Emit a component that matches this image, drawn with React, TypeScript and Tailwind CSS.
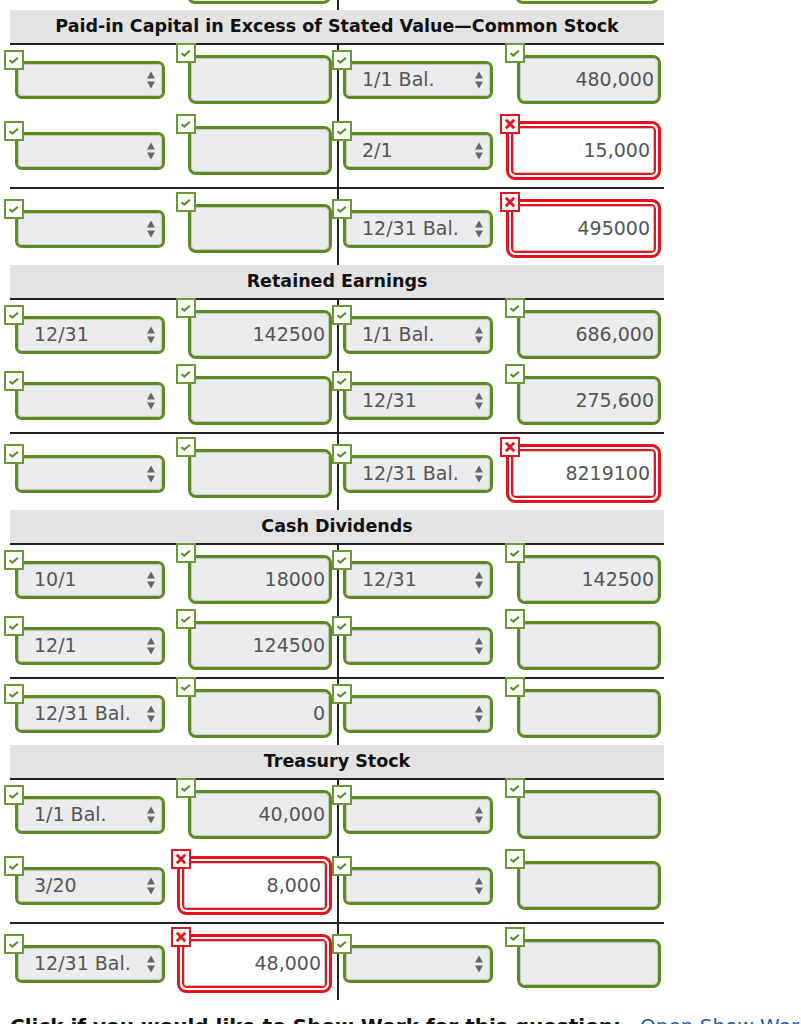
import React from "react"

type Cell = { sel?: string; val?: string; bad?: boolean }
type Row = { l: Cell; r: Cell; line?: boolean }
type Section = { title: string; rows: Row[] }

const sections: Section[] = [
  {
    title: "Paid-in Capital in Excess of Stated Value—Common Stock",
    rows: [
      { l: {}, r: { sel: "1/1 Bal.", val: "480,000" } },
      { l: {}, r: { sel: "2/1", val: "15,000", bad: true } },
      { l: {}, r: { sel: "12/31 Bal.", val: "495000", bad: true }, line: true },
    ],
  },
  {
    title: "Retained Earnings",
    rows: [
      { l: { sel: "12/31", val: "142500" }, r: { sel: "1/1 Bal.", val: "686,000" } },
      { l: {}, r: { sel: "12/31", val: "275,600" } },
      { l: {}, r: { sel: "12/31 Bal.", val: "8219100", bad: true }, line: true },
    ],
  },
  {
    title: "Cash Dividends",
    rows: [
      { l: { sel: "10/1", val: "18000" }, r: { sel: "12/31", val: "142500" } },
      { l: { sel: "12/1", val: "124500" }, r: {} },
      { l: { sel: "12/31 Bal.", val: "0" }, r: {}, line: true },
    ],
  },
  {
    title: "Treasury Stock",
    rows: [
      { l: { sel: "1/1 Bal.", val: "40,000" }, r: {} },
      { l: { sel: "3/20", val: "8,000", bad: true }, r: {} },
      { l: { sel: "12/31 Bal.", val: "48,000", bad: true }, r: {}, line: true },
    ],
  },
]

// small green tick badge that sits on the top-left corner of a field
function Tick({ pos }: { pos: string }) {
  return (
    <span className={`absolute ${pos} z-10 w-5 h-5 bg-white border-2 border-[#6a9a34]`}>
      <svg viewBox="0 0 16 16" className="w-4 h-4">
        <path d="M3.5 8.2l2.8 2.4 5.6-4.8" fill="none" stroke="#5b8c1f" strokeWidth="2" />
      </svg>
    </span>
  )
}

function Cross() {
  return (
    <span className="absolute -left-[6px] -top-[7px] z-10 w-5 h-5 bg-white border-2 border-[#e3141b]">
      <svg viewBox="0 0 16 16" className="w-4 h-4">
        <path d="M3.8 3.8l8.4 8.4M12.2 3.8l-8.4 8.4" fill="none" stroke="#e3141b" strokeWidth="2.8" />
      </svg>
    </span>
  )
}

function Arrows() {
  return (
    <svg viewBox="0 0 8 18" className="w-2 h-[18px] shrink-0">
      <path d="M0 7.5L4 0.5L8 7.5Z" fill="#676767" />
      <path d="M0 10.5L8 10.5L4 17.5Z" fill="#676767" />
    </svg>
  )
}

function Select({ v }: { v?: string }) {
  return (
    <div className="relative w-[150px] h-[38px] shrink-0">
      <Tick pos="-left-[11px] -top-[11px]" />
      <div className="h-full rounded-[7px] border-[3px] border-[#5b8c1f] bg-white">
        <div className="h-full flex items-center rounded-[4px] border border-[#c6c7c9] bg-[#ebecee] pl-[15px] pr-[6px]">
          <span className="flex-1 text-[19px] leading-none text-[#555] whitespace-nowrap">{v}</span>
          <Arrows />
        </div>
      </div>
    </div>
  )
}

function Amount({ v, bad }: { v?: string; bad?: boolean }) {
  if (bad) {
    return (
      <div className="relative w-[155px] h-[59px]">
        <Cross />
        <div className="h-full rounded-[9px] border-[3px] border-[#e3141b] bg-white p-[2px]">
          <div className="h-full rounded-[5px] border-2 border-[#e3141b]">
            <div className="h-full flex items-center justify-end rounded-[3px] border border-[#c6c7c9] bg-white pr-[3px]">
              <span className="text-[19px] leading-none text-[#555]">{v}</span>
            </div>
          </div>
        </div>
      </div>
    )
  }
  return (
    <div className="relative w-[144px] h-[49px]">
      <Tick pos="-left-[12px] -top-[12px]" />
      <div className="h-full rounded-[8px] border-[3px] border-[#5b8c1f] bg-white">
        <div className="h-full flex items-center justify-end rounded-[5px] border border-[#c6c7c9] bg-[#ebecee] pr-[3px]">
          <span className="text-[19px] leading-none text-[#555]">{v}</span>
        </div>
      </div>
    </div>
  )
}

function Half({ c, left }: { c: Cell; left?: boolean }) {
  return (
    <div className={`flex items-center ${left ? "pl-[5px]" : "pl-[4px]"}`}>
      <Select v={c.sel} />
      <div className={`w-[156px] flex justify-end ${left ? "ml-[11px]" : "ml-[12px]"}`}>
        <Amount v={c.val} bad={c.bad} />
      </div>
    </div>
  )
}

function TRow({ row }: { row: Row }) {
  const tall = row.l.bad || row.r.bad
  return (
    <>
      {row.line && <div className="h-[2px] bg-[#222]" />}
      <div className={`grid grid-cols-[327px_2px_325px] ${tall ? "h-[76px]" : "h-[66px]"}`}>
        <div className="flex items-center pt-[3px]">
          <Half c={row.l} left />
        </div>
        <div className="bg-[#222]" />
        <div className="flex items-center pt-[3px]">
          <Half c={row.r} />
        </div>
      </div>
    </>
  )
}

export default function App() {
  return (
    <div className="w-[801px] h-[1024px] overflow-hidden bg-white font-['DejaVu_Sans',Verdana,sans-serif]">
      {/* tail end of the account above */}
      <div className="ml-[10px] w-[654px] h-[10px] overflow-hidden grid grid-cols-[327px_2px_325px] items-end">
        <div className="flex items-end h-[10px] pb-[6px] pl-[177px]">
          <div className="w-[144px] h-[49px] shrink-0 rounded-[8px] border-[3px] border-[#5b8c1f] bg-[#ebecee]" />
        </div>
        <div className="bg-[#222] h-[10px]" />
        <div className="flex items-end h-[10px] pb-[6px] pl-[176px]">
          <div className="w-[144px] h-[49px] shrink-0 rounded-[8px] border-[3px] border-[#5b8c1f] bg-[#ebecee]" />
        </div>
      </div>

      <div className="ml-[10px] w-[654px]">
        {sections.map((s) => (
          <div key={s.title}>
            <div className="h-[35px] bg-[#e3e3e3] border-b-2 border-[#222] flex items-center justify-center">
              <span className="text-[17.5px] font-bold text-[#111] whitespace-nowrap">{s.title}</span>
            </div>
            {s.rows.map((r, i) => (
              <TRow key={i} row={r} />
            ))}
          </div>
        ))}
      </div>

      <div className="mt-[11px] ml-[10px] grid grid-cols-[630px_auto] items-baseline whitespace-nowrap leading-[30px]">
        <span className="text-[20px] font-bold text-[#111]">Click if you would like to Show Work for this question:</span>
        <span className="text-[20px] text-[#1d5fa8]">Open Show Work</span>
      </div>
    </div>
  )
}
